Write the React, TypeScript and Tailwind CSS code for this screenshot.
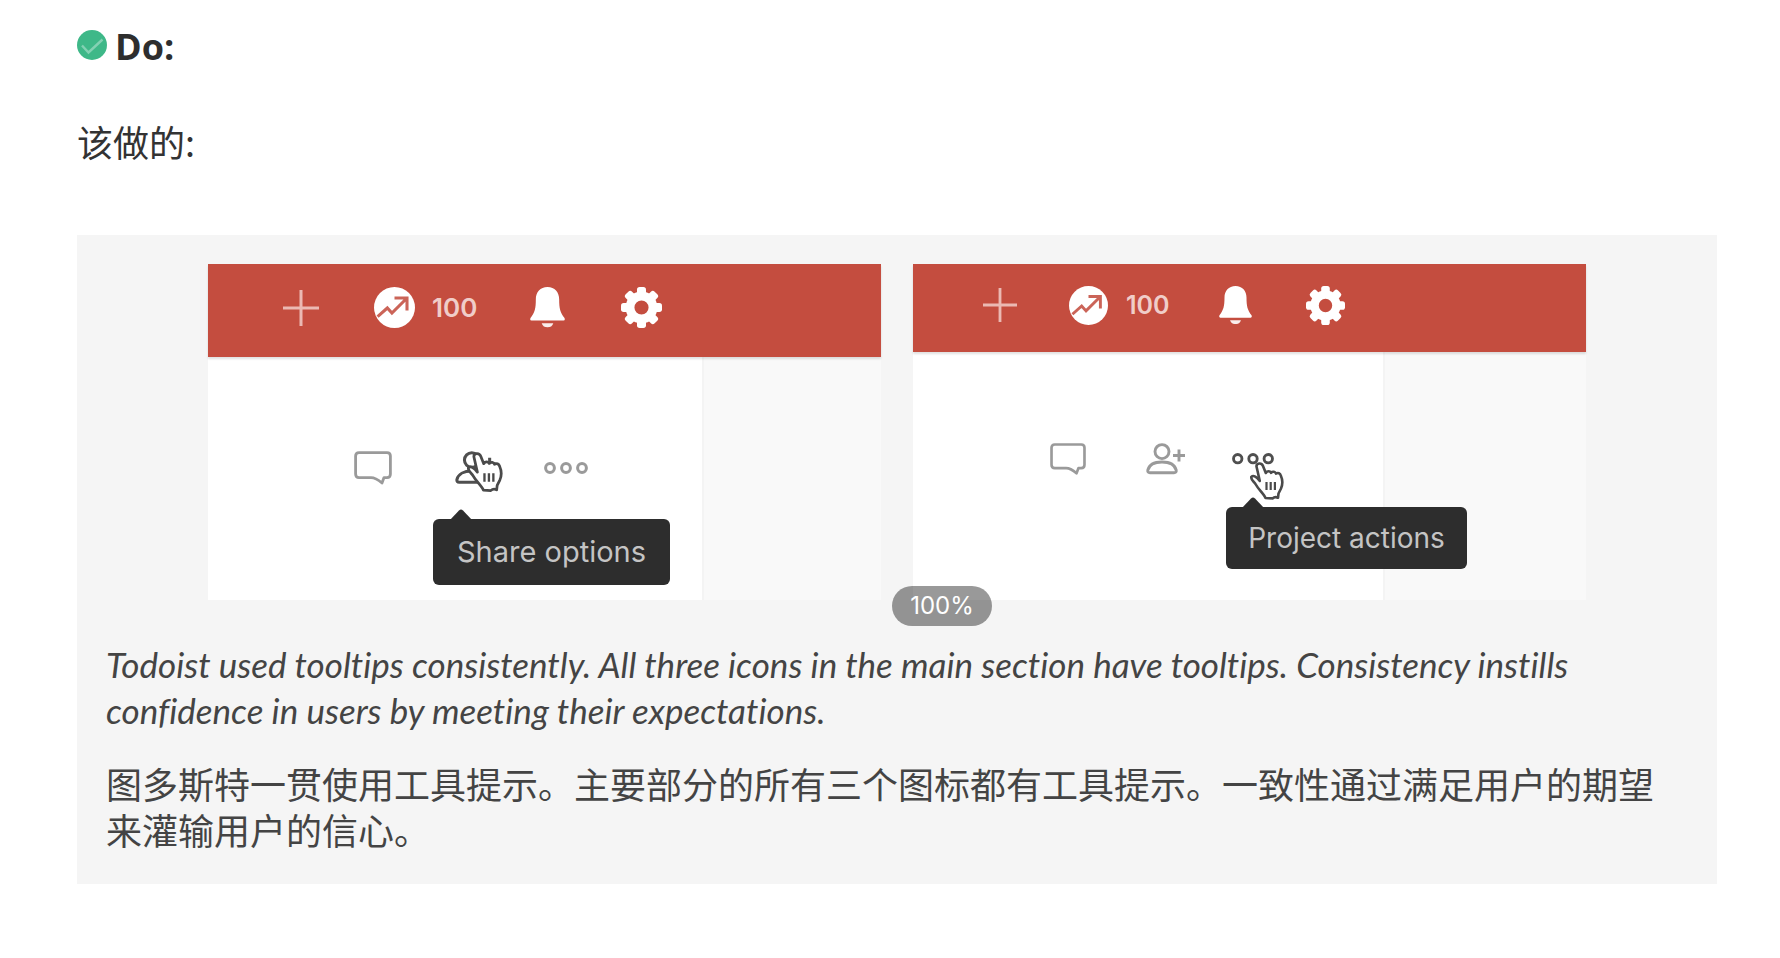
import React from "react";
import clsx from "clsx";

const CheckBadge = () => (
    <svg viewBox="0 0 30 30" className="mt-[6px] h-[30px] w-[30px] shrink-0" aria-hidden="true">
        <circle cx="15" cy="15" r="15" fill="#3eb888" />
        <path d="M5 15.5 L11.5 22.5 L25.5 9.5" fill="none" stroke="#83d1b3" strokeWidth="2.4" />
    </svg>
);

const PlusIcon = () => (
    <svg viewBox="0 0 36 36" className="w-full">
        <path d="M18 0V36M0 18H36" stroke="#ebb9b3" strokeWidth="3" />
    </svg>
);

const TrendIcon = () => (
    <svg viewBox="0 0 40 40" className="w-full">
        <circle cx="20" cy="20" r="20" fill="#fff" />
        <path
            d="M3.5 29 L13 20.5 L17.5 25.5 L31.5 11.5 M20 10.8 H32.2 V23"
            fill="none"
            stroke="#cb6458"
            strokeWidth="3"
        />
    </svg>
);

const BellIcon = () => (
    <svg viewBox="0 0 36 42" className="w-full" fill="#fff">
        <path d="M18 0 C25.5 0 30 5.5 30 12.5 C30 22 31 26 35.5 32 Q36.4 34.5 34.5 34.5 H1.5 Q-.4 34.5 .5 32 C5 26 6 22 6 12.5 C6 5.5 10.5 0 18 0Z" />
        <path d="M12 37.3 H24 C23 40.3 21 41.5 18 41.5 C15 41.5 13 40.3 12 37.3Z" opacity=".9" />
    </svg>
);

const teeth = [0, 45, 90, 135, 180, 225, 270, 315];

const GearIcon = () => (
    <svg viewBox="0 0 40 40" className="w-full">
        <circle cx="20" cy="20" r="11.2" fill="none" stroke="#fff" strokeWidth="8.6" />
        {teeth.map((angle) => (
            <rect
                key={angle}
                x="15.6"
                y="0"
                width="8.8"
                height="8"
                rx="2.6"
                fill="#fff"
                transform={`rotate(${angle} 20 20)`}
            />
        ))}
    </svg>
);

const CommentIcon = () => (
    <svg viewBox="0 0 38 34" className="w-full">
        <path
            d="M5 1.6 H33 Q36.4 1.6 36.4 5 V23 Q36.4 26.6 33 26.6 H30 L28 32 C24.5 29 21.5 26.6 17 26.6 H5 Q1.6 26.6 1.6 23 V5 Q1.6 1.6 5 1.6Z"
            fill="none"
            stroke="currentColor"
            strokeWidth="2.8"
            strokeLinejoin="round"
        />
    </svg>
);

const PersonPlusIcon = () => (
    <svg viewBox="0 0 40 32" className="w-full" fill="none" stroke="currentColor" strokeWidth="2.9">
        <circle cx="16" cy="8.6" r="7" />
        <path d="M4 29.8 H28 Q30.6 29.8 30.2 27.2 C29 22 23.5 19 16 19 C8.5 19 3 22 1.8 27.2 Q1.4 29.8 4 29.8Z" />
        <path d="M33 6.5 V18.5 M27 12.5 H39" />
    </svg>
);

const DotsIcon = () => (
    <svg viewBox="0 0 44 12" className="w-full" fill="none" stroke="currentColor" strokeWidth="3">
        <circle cx="6" cy="6" r="4.4" />
        <circle cx="22" cy="6" r="4.4" />
        <circle cx="38" cy="6" r="4.4" />
    </svg>
);

const HandCursor = () => (
    <svg viewBox="0 0 34 38" className="w-full" stroke="#4a4a4a" strokeLinejoin="round">
        <path
            d="M6.5 4.5 C6.3 .9 11.5 .3 13 4 L15.8 11 C17.3 8.6 20.2 8.9 21 10.8 C22.7 9 25.3 9.6 26 11.6 C28 10.3 30.2 11.2 30.8 13.5 C32.8 18 33 22 31 26.5 L28.5 31.5 L28 35.8 Q25 34.2 22.5 36.4 L15.5 36 C13.5 31.5 8.5 27.5 5.8 22.5 C4.3 19.6 .8 18.4 1.3 14.9 C3.5 12.7 6.8 15 9.8 19 Z"
            fill="#fff"
            strokeWidth="2.6"
        />
        <path d="M16.5 20 V28 M20.7 20 V28 M24.9 20 V28" strokeWidth="2.2" fill="none" />
    </svg>
);

interface ShotStyle {
    bar: string;
    plus: string;
    trend: string;
    score: string;
    bell: string;
    gear: string;
    tools: string;
    comment: string;
    share: string;
    more: string;
    aside: string;
    hand: string;
    tip: string;
    arrow: string;
}

const shareShot: ShotStyle = {
    bar: "h-[93px] pl-[75px]",
    plus: "w-[36px]",
    trend: "ml-[55px] w-[41px]",
    score: "ml-[17px] w-[46px] text-[26px]",
    bell: "ml-[52px] w-[35px]",
    gear: "ml-[56px] w-[41px]",
    tools: "h-[222px] pl-[146px]",
    comment: "w-[38px]",
    share: "ml-[63px] w-[42px]",
    more: "ml-[47px] w-[44px]",
    aside: "w-[179px]",
    hand: "left-[12px] top-[1px] w-[36px]",
    tip: "-left-[22px] top-[68px] h-[66px] w-[237px] text-[29px]",
    arrow: "left-[16px]",
};

const actionsShot: ShotStyle = {
    bar: "h-[88px] pl-[70px]",
    plus: "w-[34px]",
    trend: "ml-[52px] w-[39px]",
    score: "ml-[18px] w-[43px] text-[25px]",
    bell: "ml-[50px] w-[33px]",
    gear: "ml-[54px] w-[39px]",
    tools: "h-[214px] pl-[137px]",
    comment: "w-[36px]",
    share: "ml-[60px] w-[40px]",
    more: "ml-[46px] w-[42px]",
    aside: "w-[203px]",
    hand: "left-[18px] top-[9px] w-[34px]",
    tip: "-left-[6px] top-[54px] h-[62px] w-[241px] text-[28px]",
    arrow: "left-[15px]",
};

const Hint = ({ text, s }: { text: string; s: ShotStyle }) => (
    <>
        <span className={clsx("absolute z-10", s.hand)}>
            <HandCursor />
        </span>
        <span
            role="tooltip"
            className={clsx(
                "absolute flex items-center justify-center rounded-md bg-[#2d2d2d] whitespace-nowrap text-[#c4c4c4]",
                s.tip
            )}
        >
            <svg viewBox="0 0 24 12" className={clsx("absolute -top-[10px] w-[24px]", s.arrow)}>
                <path d="M0 12 L10 1.5 Q12 -.5 14 1.5 L24 12Z" fill="#2d2d2d" />
            </svg>
            {text}
        </span>
    </>
);

const Shot = ({ s, active }: { s: ShotStyle; active: "share" | "more" }) => (
    <div className="flex h-[336px] min-w-0 flex-1 flex-col bg-white font-['Inter',sans-serif]">
        <div className={clsx("relative flex shrink-0 items-center bg-[#c44d3f] pb-[6px] shadow-[0_2px_2px_rgba(0,0,0,0.12)]", s.bar)}>
            <button aria-label="Add task" className={clsx("shrink-0", s.plus)}>
                <PlusIcon />
            </button>
            <button aria-label="Productivity" className={clsx("shrink-0", s.trend)}>
                <TrendIcon />
            </button>
            <span className={clsx("shrink-0 font-semibold text-[#f0cdc9]", s.score)}>100</span>
            <button aria-label="Notifications" className={clsx("shrink-0", s.bell)}>
                <BellIcon />
            </button>
            <button aria-label="Settings" className={clsx("shrink-0", s.gear)}>
                <GearIcon />
            </button>
        </div>
        <div className="flex flex-1">
            <div className="min-w-0 flex-1">
                <div className={clsx("flex items-center text-[#9a9a9a]", s.tools)}>
                    <button aria-label="Comments" className={clsx("shrink-0", s.comment)}>
                        <CommentIcon />
                    </button>
                    <div className={clsx("relative shrink-0", s.share)}>
                        <button
                            aria-label="Share options"
                            className={clsx("block w-full", active === "share" && "text-[#4f4f4f]")}
                        >
                            <PersonPlusIcon />
                        </button>
                        {active === "share" && <Hint text="Share options" s={s} />}
                    </div>
                    <div className={clsx("relative shrink-0", s.more)}>
                        <button
                            aria-label="Project actions"
                            className={clsx("block w-full", active === "more" && "text-[#4f4f4f]")}
                        >
                            <DotsIcon />
                        </button>
                        {active === "more" && <Hint text="Project actions" s={s} />}
                    </div>
                </div>
            </div>
            <div className={clsx("shrink-0 border-l-2 border-[#f4f4f4] bg-[#f9f9f9]", s.aside)} />
        </div>
    </div>
);

const App = () => {
    return (
        <main className="bg-white pt-[24px] pr-[63px] pb-[74px] pl-[77px] font-['Noto_Sans_CJK_SC',sans-serif] text-[36px] leading-[46px] text-[#333333]">
            <h2 className="flex items-start gap-2 font-['Open_Sans',sans-serif] font-bold text-[#2e2e2e]">
                <CheckBadge />
                Do:
            </h2>
            <p lang="zh-CN" className="mt-[48px]">该做的:</p>

            <figure className="mt-[71px] bg-[#f5f5f5] px-[29px] pt-[29px] pb-[32px] text-[#444444]">
                <div className="relative flex gap-8 px-[102px]">
                    <Shot s={shareShot} active="share" />
                    <Shot s={actionsShot} active="more" />
                    <span className="absolute -bottom-[26px] left-[786px] flex h-[40px] w-[100px] items-center justify-center rounded-full bg-black/40 font-['Inter',sans-serif] text-[24px] text-white">
                        100%
                    </span>
                </div>
                <figcaption className="mt-[41px] flex flex-col gap-[27px]">
                    <p className="font-['Lato',sans-serif] text-[35px] italic [font-variant-ligatures:none]">
                        Todoist used tooltips consistently. All three icons in the main section have tooltips. Consistency instills
                        confidence in users by meeting their expectations.
                    </p>
                    <p lang="zh-CN">
                        图多斯特一贯使用工具提示。主要部分的所有三个图标都有工具提示。一致性通过满足用户的期望来灌输用户的信心。
                    </p>
                </figcaption>
            </figure>
        </main>
    );
};

export default App;
